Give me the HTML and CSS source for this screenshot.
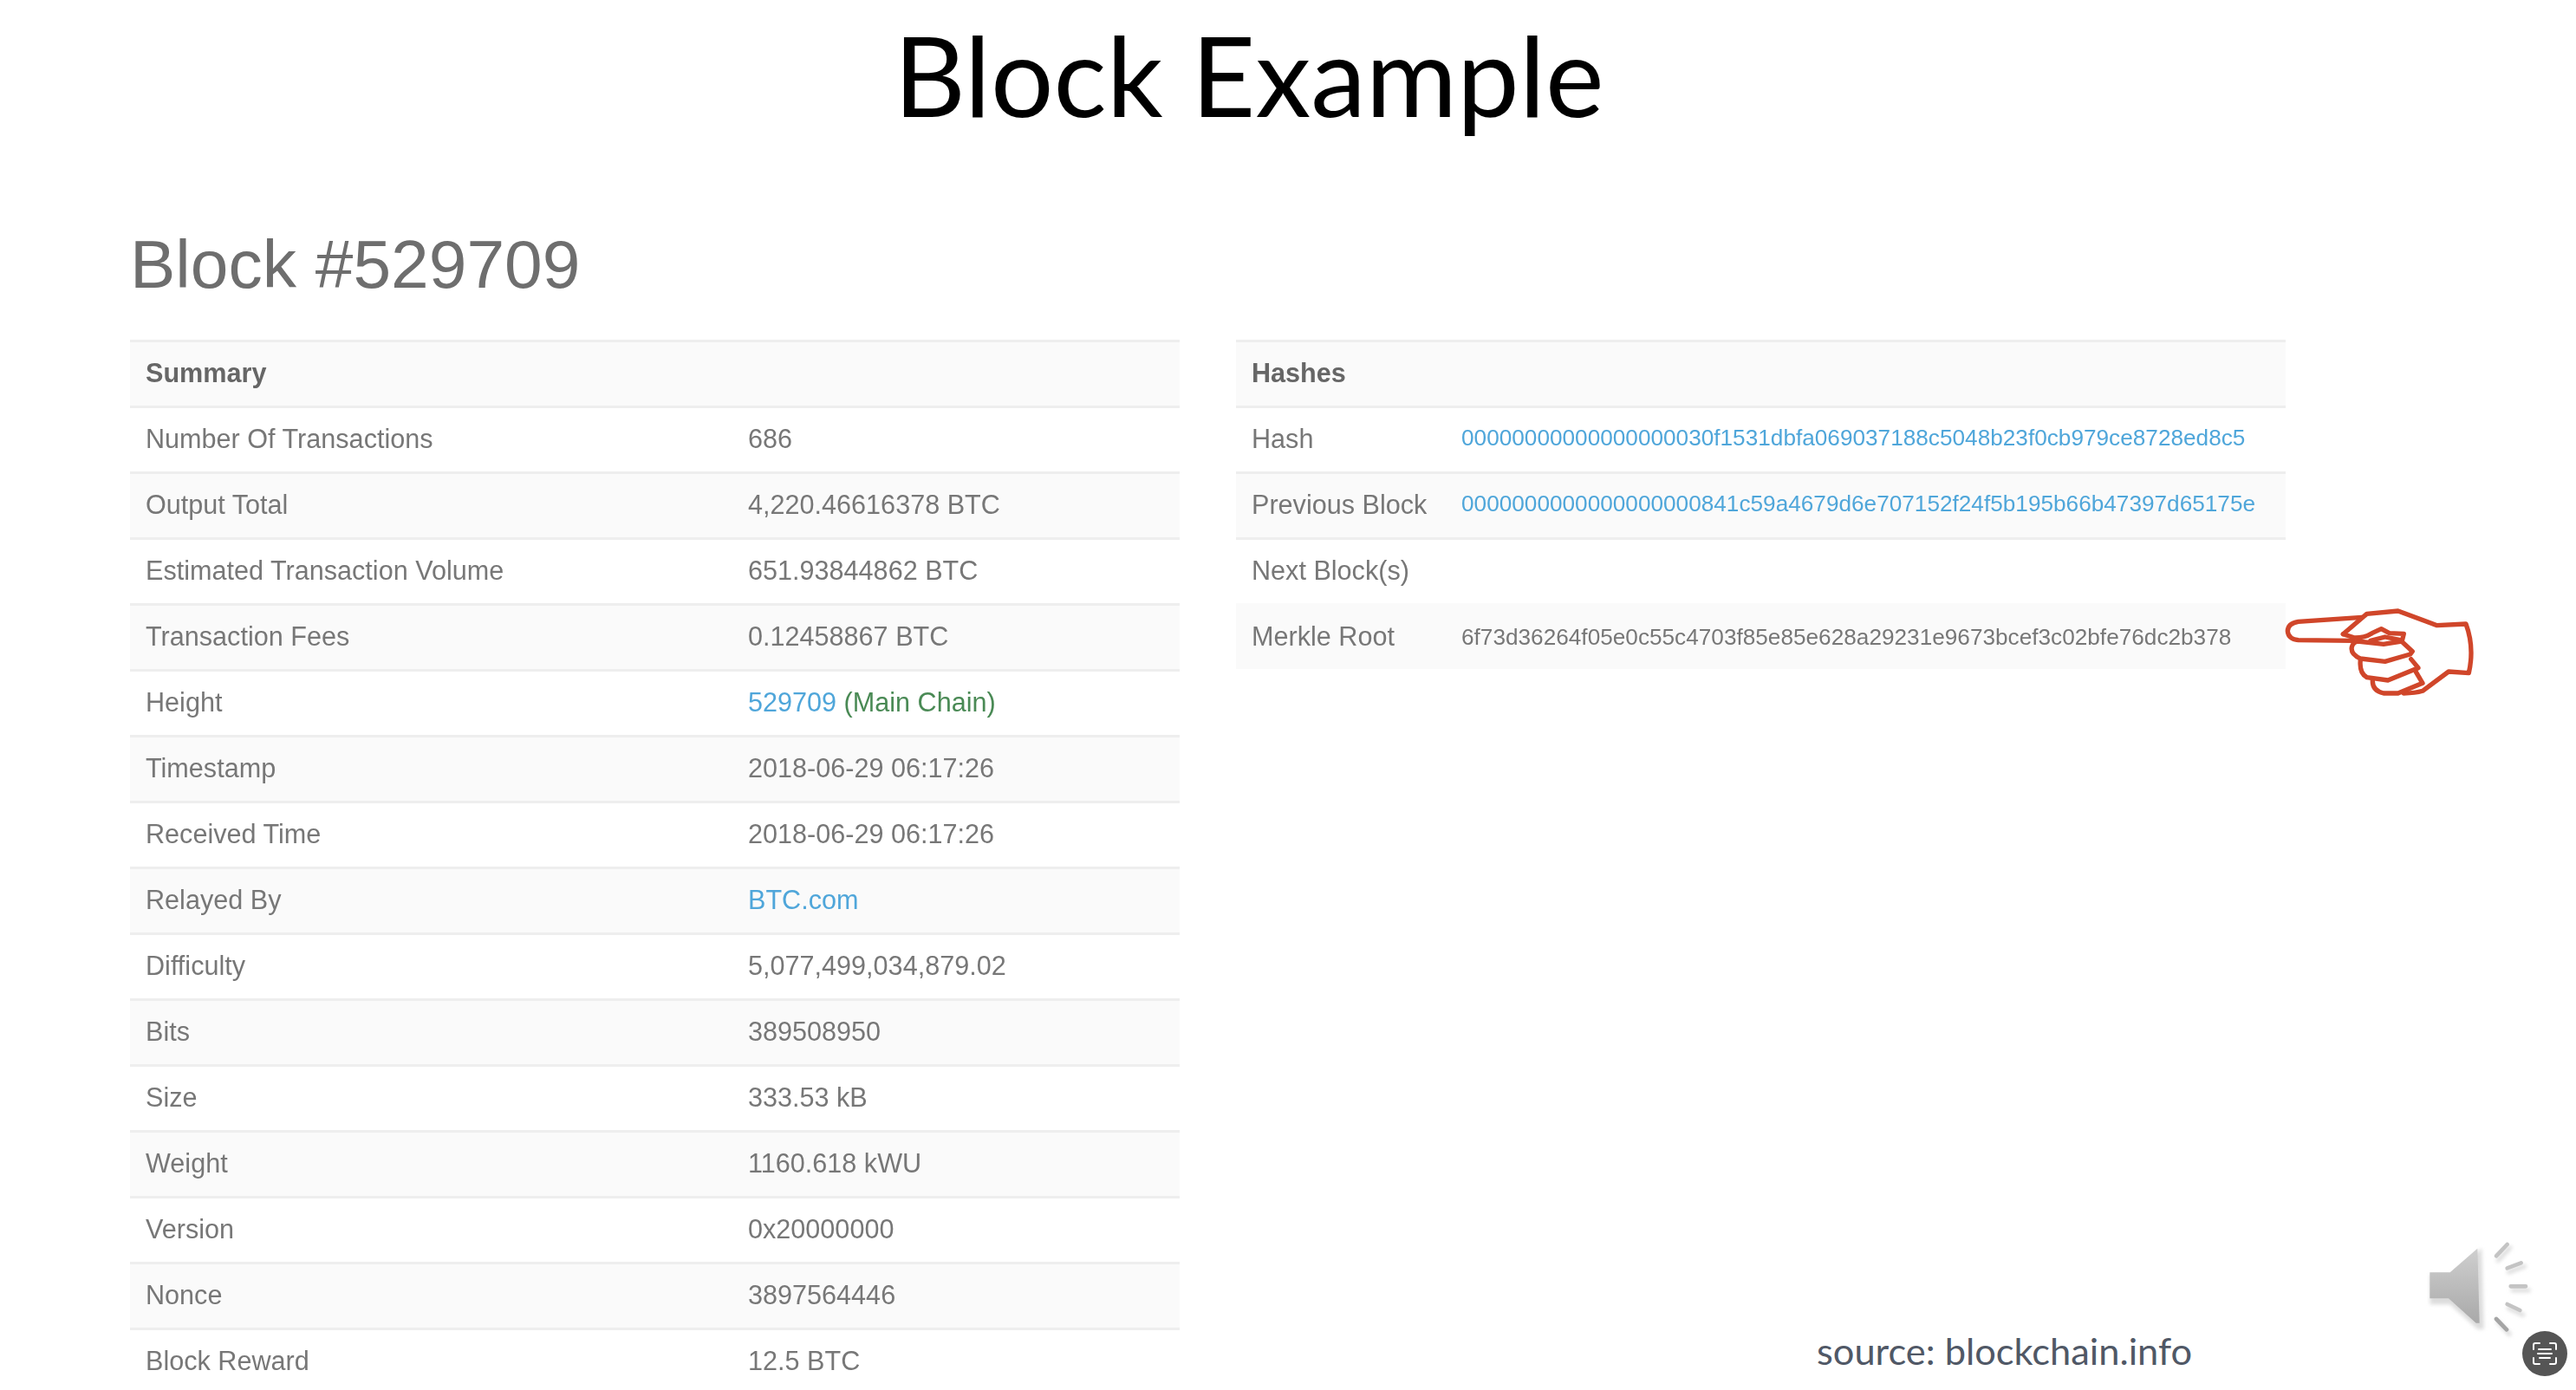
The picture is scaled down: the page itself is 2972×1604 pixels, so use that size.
FILE: index.html
```html
<!DOCTYPE html>
<html lang="en">
<head>
<meta charset="utf-8">
<title>Block Example</title>
<link rel="stylesheet" href="styles.css">
</head>
<body>
<main class="slide">
  <h1 class="slide-title">Block Example</h1>
  <h2 class="block-title">Block #529709</h2>
  <div class="tables">
    <table class="info summary">
      <colgroup><col class="label-col"><col></colgroup>
      <thead><tr><th colspan="2">Summary</th></tr></thead>
      <tbody>
        <tr><td>Number Of Transactions</td><td>686</td></tr>
        <tr><td>Output Total</td><td>4,220.46616378 BTC</td></tr>
        <tr><td>Estimated Transaction Volume</td><td>651.93844862 BTC</td></tr>
        <tr><td>Transaction Fees</td><td>0.12458867 BTC</td></tr>
        <tr><td>Height</td><td><a href="#">529709</a> <span class="main-chain">(Main Chain)</span></td></tr>
        <tr><td>Timestamp</td><td>2018-06-29 06:17:26</td></tr>
        <tr><td>Received Time</td><td>2018-06-29 06:17:26</td></tr>
        <tr><td>Relayed By</td><td><a href="#">BTC.com</a></td></tr>
        <tr><td>Difficulty</td><td>5,077,499,034,879.02</td></tr>
        <tr><td>Bits</td><td>389508950</td></tr>
        <tr><td>Size</td><td>333.53 kB</td></tr>
        <tr><td>Weight</td><td>1160.618 kWU</td></tr>
        <tr><td>Version</td><td>0x20000000</td></tr>
        <tr><td>Nonce</td><td>3897564446</td></tr>
        <tr><td>Block Reward</td><td>12.5 BTC</td></tr>
      </tbody>
    </table>
    <table class="info hashes">
      <colgroup><col class="label-col"><col></colgroup>
      <thead><tr><th colspan="2">Hashes</th></tr></thead>
      <tbody>
        <tr><td>Hash</td><td class="hash"><a href="#">00000000000000000030f1531dbfa069037188c5048b23f0cb979ce8728ed8c5</a></td></tr>
        <tr><td>Previous Block</td><td class="hash"><a href="#">0000000000000000000841c59a4679d6e707152f24f5b195b66b47397d65175e</a></td></tr>
        <tr><td>Next Block(s)</td><td></td></tr>
        <tr class="merkle"><td>Merkle Root</td><td class="hash">6f73d36264f05e0c55c4703f85e85e628a29231e9673bcef3c02bfe76dc2b378</td></tr>
      </tbody>
    </table>
  </div>

  <svg class="hand" viewBox="0 0 1020 540" aria-hidden="true">
    <g fill="none" stroke="#d0462a" stroke-width="16" stroke-linejoin="round" stroke-linecap="round">
      <path d="M495 157L275 172Q238 178 238 205Q240 232 275 236L465 238"/>
      <path d="M430 215L500 155L512 145L620 135L755 185L855 180Q885 260 865 350L795 345L705 412Q680 420 640 420"/>
      <path d="M430 215L470 228Q505 228 530 212L562 197L590 212L640 214L634 238"/>
      <path d="M525 238L575 225L625 235"/>
      <path d="M480 240L570 250L632 240L670 275L662 285L575 310L490 300Q455 285 460 260Q464 244 480 240Z"/>
      <path d="M490 304Q485 350 512 365L585 375L690 332L665 302"/>
      <path d="M532 375Q530 410 570 420L620 420L705 385L682 346"/>
    </g>
  </svg>

  <svg class="speaker" viewBox="0 0 696 612" aria-hidden="true">
    <defs>
      <linearGradient id="cone" x1="0" y1="0" x2="0" y2="1">
        <stop offset="0" stop-color="#cfcfcf"/>
        <stop offset="1" stop-color="#a9a9a9"/>
      </linearGradient>
      <filter id="soft"><feGaussianBlur stdDeviation="7"/></filter>
      <filter id="edge"><feGaussianBlur stdDeviation="1.5"/></filter>
    </defs>
    <g filter="url(#soft)" transform="translate(8 14)" fill="#dcdcdc" stroke="#dcdcdc" stroke-width="14" stroke-linecap="round">
      <path d="M190 205H260L355 122L362 380H350L255 295H190Z"/>
      <path d="M418 150L460 105M455 190L510 170M468 253H525M455 315L505 338M418 362L458 405"/>
    </g>
    <g filter="url(#edge)">
      <path d="M190 205H260L355 122L362 380H350L255 295H190Z" fill="url(#cone)"/>
      <path d="M420 148L458 108M458 190L506 172M470 253H522M458 315L502 336" stroke="#c4c4c4" stroke-width="14" stroke-linecap="round"/>
      <path d="M420 366L456 403" stroke="#a5a5a5" stroke-width="14" stroke-linecap="round"/>
    </g>
  </svg>

  <p class="source">source: blockchain.info</p>

  <svg class="scan-badge" viewBox="0 0 52 52" aria-hidden="true">
    <circle cx="26" cy="26" r="26" fill="#555"/>
    <g fill="none" stroke="#fff" stroke-width="2" stroke-linecap="round" stroke-linejoin="round">
      <path d="M13 21V16Q13 14 15 14H20M32 14H37Q39 14 39 16V21M13 31V36Q13 38 15 38H20M32 38H37Q39 38 39 36V31"/>
      <path d="M19 21H33M18 26H34M20 31H32"/>
    </g>
  </svg>
</main>
</body>
</html>
```
FILE: styles.css
```css
* { box-sizing: border-box; }

html, body {
  margin: 0;
  background: #fff;
}

.slide {
  position: relative;
  width: 2972px;
  height: 1604px;
  overflow: hidden;
  padding-left: 150px;
  font-family: "Liberation Sans", Arial, sans-serif;
  color: #777;
}

.slide-title {
  margin: 0 0 0 -150px;
  padding: 6px 90px 0 0;
  height: 180px;
  text-align: center;
  font-family: Lato, "Open Sans", sans-serif;
  font-size: 128px;
  font-weight: 400;
  line-height: 160px;
  color: #000;
}

.block-title {
  margin: 0;
  height: 212px;
  padding-top: 77px;
  font-size: 78.5px;
  font-weight: 400;
  line-height: 96px;
  color: #6e6e6e;
  filter: blur(0.5px);
}

.tables {
  display: flex;
  gap: 65px;
  align-items: flex-start;
  filter: blur(0.5px);
}

.info {
  width: 1211px;
  flex: none;
  table-layout: fixed;
  border-collapse: separate;
  border-spacing: 0;
  font-size: 30.6px;
}

.info tr { height: 76px; }

.info th,
.info td {
  padding: 0 0 2px 18px;
  border-top: 3px solid #eeeeee;
  text-align: left;
  vertical-align: middle;
  white-space: nowrap;
}

.info th {
  font-weight: 700;
  color: #666;
}

.info thead tr,
.info tbody tr:nth-child(even) { background: #fafafa; }

.summary .label-col { width: 695px; }
.hashes .label-col { width: 242px; }

.info a {
  color: #4fa6da;
  text-decoration: none;
}

.main-chain { color: #4a8a55; }

.hash { font-size: 26.2px; }

.hash a { position: relative; top: -1px; }

.merkle td { border-top-color: transparent; }

.merkle .hash { padding-bottom: 0; }

.info tbody .merkle {
  background:
    linear-gradient(#eeeeee, #eeeeee) top left / 1163px 3px no-repeat,
    #fafafa;
}

.hand {
  position: absolute;
  left: 2560px;
  top: 660px;
  width: 340px;
  height: 180px;
}

.speaker {
  position: absolute;
  left: 2740px;
  top: 1400px;
  width: 232px;
  height: 204px;
}

.source {
  position: absolute;
  left: 2096px;
  top: 1528px;
  margin: 0;
  font-family: Lato, "Open Sans", sans-serif;
  font-size: 43.4px;
  line-height: 60px;
  color: #505866;
}

.scan-badge {
  position: absolute;
  left: 2910px;
  top: 1536px;
  width: 52px;
  height: 52px;
}
```
